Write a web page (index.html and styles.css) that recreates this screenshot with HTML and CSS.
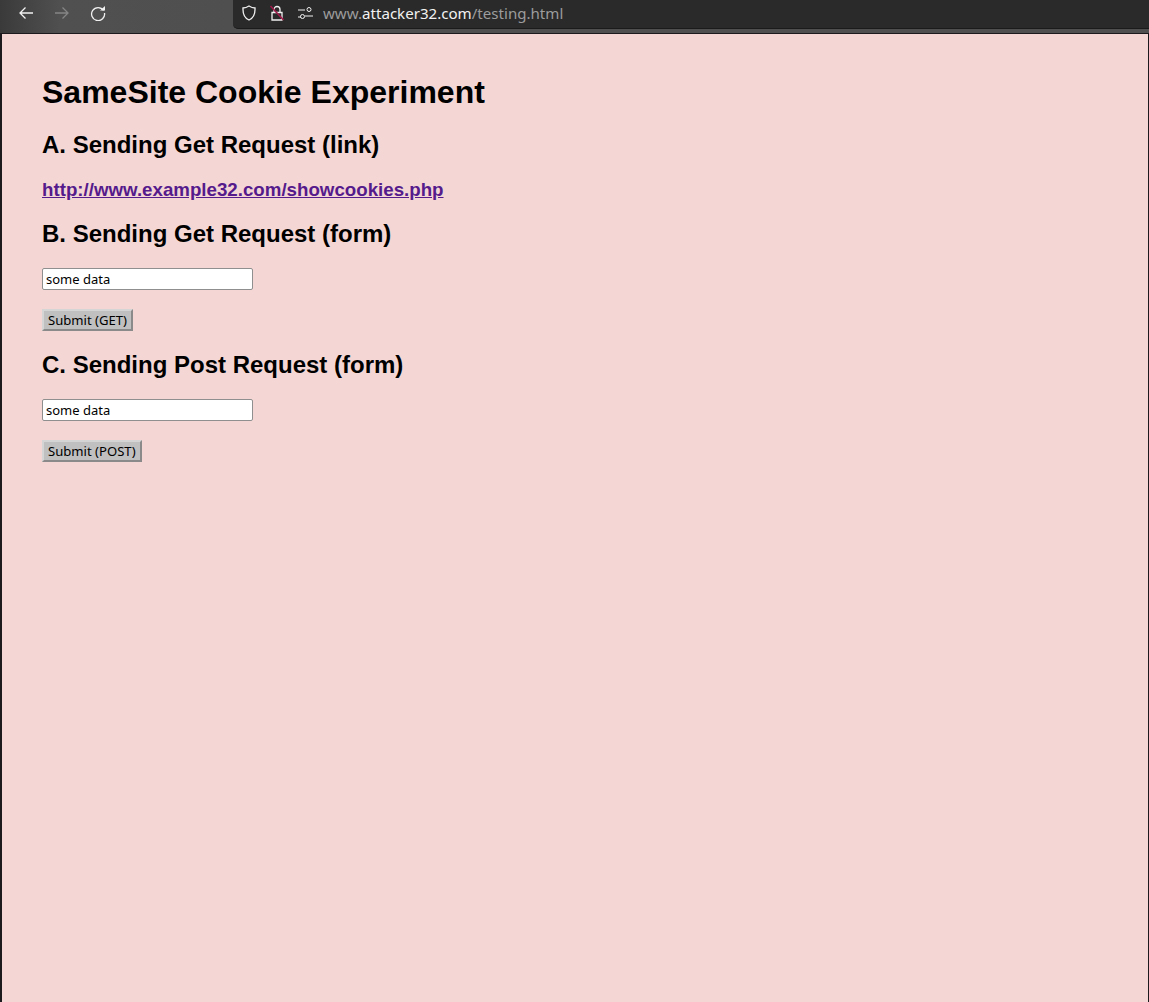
FILE: index.html
```html
<!DOCTYPE html>
<html lang="en">
<head>
  <meta charset="UTF-8">
  <title>SameSite Cookie Experiment</title>
  <link rel="stylesheet" href="styles.css">
</head>
<body>
  <!-- Browser toolbar -->
  <div class="toolbar">
    <div class="nav-buttons">
      <svg class="icon" viewBox="0 0 16 16"><path d="M15 8H2M7.5 2.5 2 8l5.500 5.500"/></svg>
      <svg class="icon icon-off" viewBox="0 0 16 16"><path d="M1 8h13M8.500 2.500 14 8l-5.500 5.500"/></svg>
      <svg class="icon" viewBox="0 0 16 16"><path d="M13.500 5.500A6.500 6.500 0 1 0 14.500 8"/><path class="solid" d="M10 5.500h5V1z"/></svg>
    </div>
    <div class="url-bar">
      <svg class="icon" viewBox="0 0 16 16"><path d="M8 1c2 1.300 4 2 6 2 .3 6-1.500 10-6 12C3.500 13 1.700 9 2 3c2 0 4-.7 6-2z"/></svg>
      <svg class="icon lock" viewBox="0 0 16 16">
        <path d="M5 7V4.500a3 3 0 0 1 6 0V7M3 7.500h10V15H3z"/>
        <path class="strike" d="M1.500 1 14.500 15"/>
      </svg>
      <svg class="icon perms" viewBox="0 0 16 16"><path d="M1 5h7M1 12h3M8 11h8"/><circle cx="12" cy="4.500" r="2"/><circle cx="5.500" cy="11.500" r="2"/></svg>
      <div class="url"><span class="url-dim">www.</span>attacker32.com<span class="url-dim">/testing.html</span></div>
    </div>
  </div>

  <!-- Page -->
  <div class="page">
    <h1>SameSite Cookie Experiment</h1>

    <h2>A. Sending Get Request (link)</h2>
    <p class="link-row"><a href="#">http://www.example32.com/showcookies.php</a></p>

    <h2>B. Sending Get Request (form)</h2>
    <form class="demo-form">
      <input type="text" value="some data">
      <button type="button">Submit (GET)</button>
    </form>

    <h2>C. Sending Post Request (form)</h2>
    <form class="demo-form">
      <input type="text" value="some data">
      <button type="button">Submit (POST)</button>
    </form>
  </div>
</body>
</html>
```

FILE: styles.css
```css
* {
  box-sizing: border-box;
}
html, body {
  height: 100%;
}
body {
  margin: 0;
  display: flex;
  flex-direction: column;
  overflow: hidden;
  background-color: #1c1a1c;
  font-family: "Liberation Sans", Arial, sans-serif;
}
.toolbar {
  flex: none;
  display: flex;
  height: 33px;
  background: linear-gradient(90deg, #3a3a3a 0, #505050 60px, #4f4f4f 232px, #4f4f4f 100%);
}
.nav-buttons {
  width: 233px;
  display: flex;
  gap: 20px;
  padding: 5px 0 0 18px;
}
.icon {
  width: 16px;
  height: 16px;
  fill: none;
  stroke: #f1f1f1;
  stroke-width: 1.300;
}
.icon-off {
  stroke: #858585;
}
.solid {
  fill: #f1f1f1;
  stroke: none;
}
.strike {
  stroke: #a01a4a;
  stroke-width: 1.600;
}
.url-bar {
  flex: 1;
  height: 29px;
  display: flex;
  align-items: flex-start;
  padding: 5px 0 0 8px;
  background-color: #2a2a2a;
  border-bottom: 1px solid #1b1b1b;
  border-bottom-left-radius: 5px;
}
.lock {
  margin-left: 12px;
}
.perms {
  margin-left: 12px;
  stroke-width: 1;
}
.url {
  margin: -2px 0 0 10px;
  font-family: "Noto Sans", "Open Sans", sans-serif;
  font-size: 15.100px;
  line-height: 20px;
  color: #f2f2f2;
}
.url-dim {
  color: #9c9c9c;
}
.page {
  flex: 1;
  margin: 1px 1px 0 2px;
  padding: 40px;
  background-color: #f4d7d5;
  color: #000;
}
h1 {
  margin: 0 0 20px;
  font-size: 32px;
  line-height: 37px;
}
h2 {
  margin: 0 0 20px;
  font-size: 24px;
  line-height: 28px;
}
.link-row {
  margin: 0 0 19px;
  font-size: 18.720px;
  line-height: 22px;
  font-weight: bold;
}
.link-row a {
  color: #551a8b;
}
.demo-form {
  display: flex;
  flex-direction: column;
  align-items: flex-start;
  gap: 19px;
  margin: 20px 0;
}
.demo-form input {
  width: 211px;
  height: 22px;
  padding: 1px 3px;
  font-family: "Noto Sans", sans-serif;
  font-size: 13px;
  color: #000;
  background-color: #fff;
  border: 1px solid #8f8f8f;
  border-radius: 2px;
}
.demo-form button {
  height: 22px;
  padding: 0 4px;
  font-family: "Noto Sans", sans-serif;
  font-size: 13.100px;
  color: #000;
  background-color: #c0c0c0;
  border: 2px solid;
  border-color: #d5d5d5 #8a8a8a #8a8a8a #d5d5d5;
}
```
